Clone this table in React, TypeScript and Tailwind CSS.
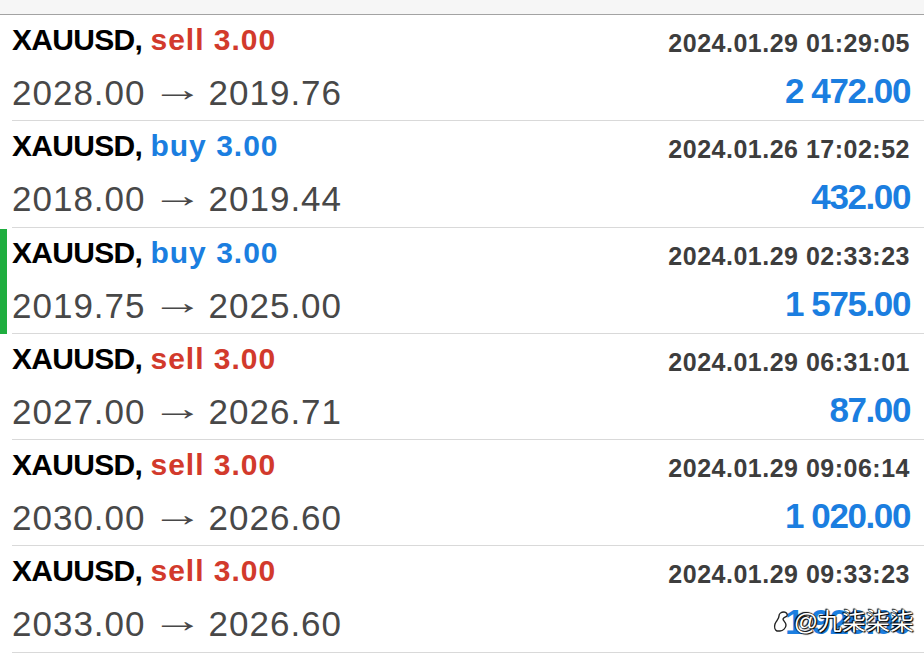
type Deal = {
  side: "buy" | "sell";
  time: string;
  open: string;
  close: string;
  profit: string;
  marked?: boolean;
};

const deals: Deal[] = [
  { side: "sell", time: "2024.01.29 01:29:05", open: "2028.00", close: "2019.76", profit: "2 472.00" },
  { side: "buy", time: "2024.01.26 17:02:52", open: "2018.00", close: "2019.44", profit: "432.00" },
  { side: "buy", time: "2024.01.29 02:33:23", open: "2019.75", close: "2025.00", profit: "1 575.00", marked: true },
  { side: "sell", time: "2024.01.29 06:31:01", open: "2027.00", close: "2026.71", profit: "87.00" },
  { side: "sell", time: "2024.01.29 09:06:14", open: "2030.00", close: "2026.60", profit: "1 020.00" },
  { side: "sell", time: "2024.01.29 09:33:23", open: "2033.00", close: "2026.60", profit: "1 920.00" },
];

function Row({ deal, last }: { deal: Deal; last?: boolean }) {
  return (
    <div className="relative flex h-[106.25px] justify-between pl-3 pr-[14px]">
      {deal.marked ? (
        <div className="absolute left-0 top-[1px] bottom-0 w-[7px] bg-[#1fae3f]" />
      ) : null}
      <div className="flex flex-col pt-[8px]">
        <p className="whitespace-nowrap text-[30px] font-bold leading-[34px] text-black">
          <span className="tracking-[-0.7px]">XAUUSD,</span>{" "}
          <span
            className={
              deal.side === "sell"
                ? "tracking-[1px] text-[#d23a2c]"
                : "tracking-[1px] text-[#1b7ee0]"
            }
          >
            {deal.side} 3.00
          </span>
        </p>
        <p className="mt-[16px] flex whitespace-nowrap text-[35px] leading-[40px] tracking-[1px] text-[#484848]">
          <span>{deal.open}</span>
          <span className="inline-block w-[63px] text-center tracking-normal">
            <span className="relative -top-[4px] inline-block scale-x-[1.5]">→</span>
          </span>
          <span>{deal.close}</span>
        </p>
      </div>
      <div className="flex flex-col items-end pt-[13px]">
        <p className="whitespace-nowrap text-[25px] font-bold leading-[30px] tracking-[0.5px] text-[#3d3d3d]">
          {deal.time}
        </p>
        <p className="mt-[13px] whitespace-nowrap text-[35px] font-bold leading-[40px] tracking-[-1.4px] text-[#1b7ee0]">
          {deal.profit}
        </p>
      </div>
      {last ? (
        <div className="absolute right-[10px] top-[62px] flex items-center gap-[3px]">
          <svg width="18" height="22" viewBox="0 0 18 22" fill="none">
            <path
              d="M4 20c-2-1-3-4-2-7 1-3 4-5 4-8 0-2 2-4 5-4 2 0 4 2 3 4-1 1-3 1-4 3 0 2 3 3 3 6 0 3-3 6-6 6-1 0-2 0-3 0z"
              fill="white"
              stroke="#222"
              strokeWidth="1.4"
            />
          </svg>
          <span
            className="text-[24px] leading-[28px] text-white [text-shadow:0_0_1px_#000,0_0_1px_#000,1px_1px_1px_#000,-1px_-1px_1px_#000]"
            style={{ fontFamily: '"Liberation Sans", "Noto Sans CJK SC", sans-serif' }}
          >
            @九柒柒柒
          </span>
        </div>
      ) : null}
      <div className="absolute bottom-0 left-3 right-0 h-px bg-[#d9d9d9]" />
    </div>
  );
}

export default function App() {
  return (
    <div
      className="h-[660px] w-[924px] overflow-hidden bg-white"
      style={{ fontFamily: '"Liberation Sans", Arial, sans-serif' }}
    >
      <div className="h-[14px] bg-[#f6f6f6]" />
      <div className="h-px bg-[#a3a3a3]" />
      {deals.map((d, i) => (
        <Row key={i} deal={d} last={i === deals.length - 1} />
      ))}
    </div>
  );
}
